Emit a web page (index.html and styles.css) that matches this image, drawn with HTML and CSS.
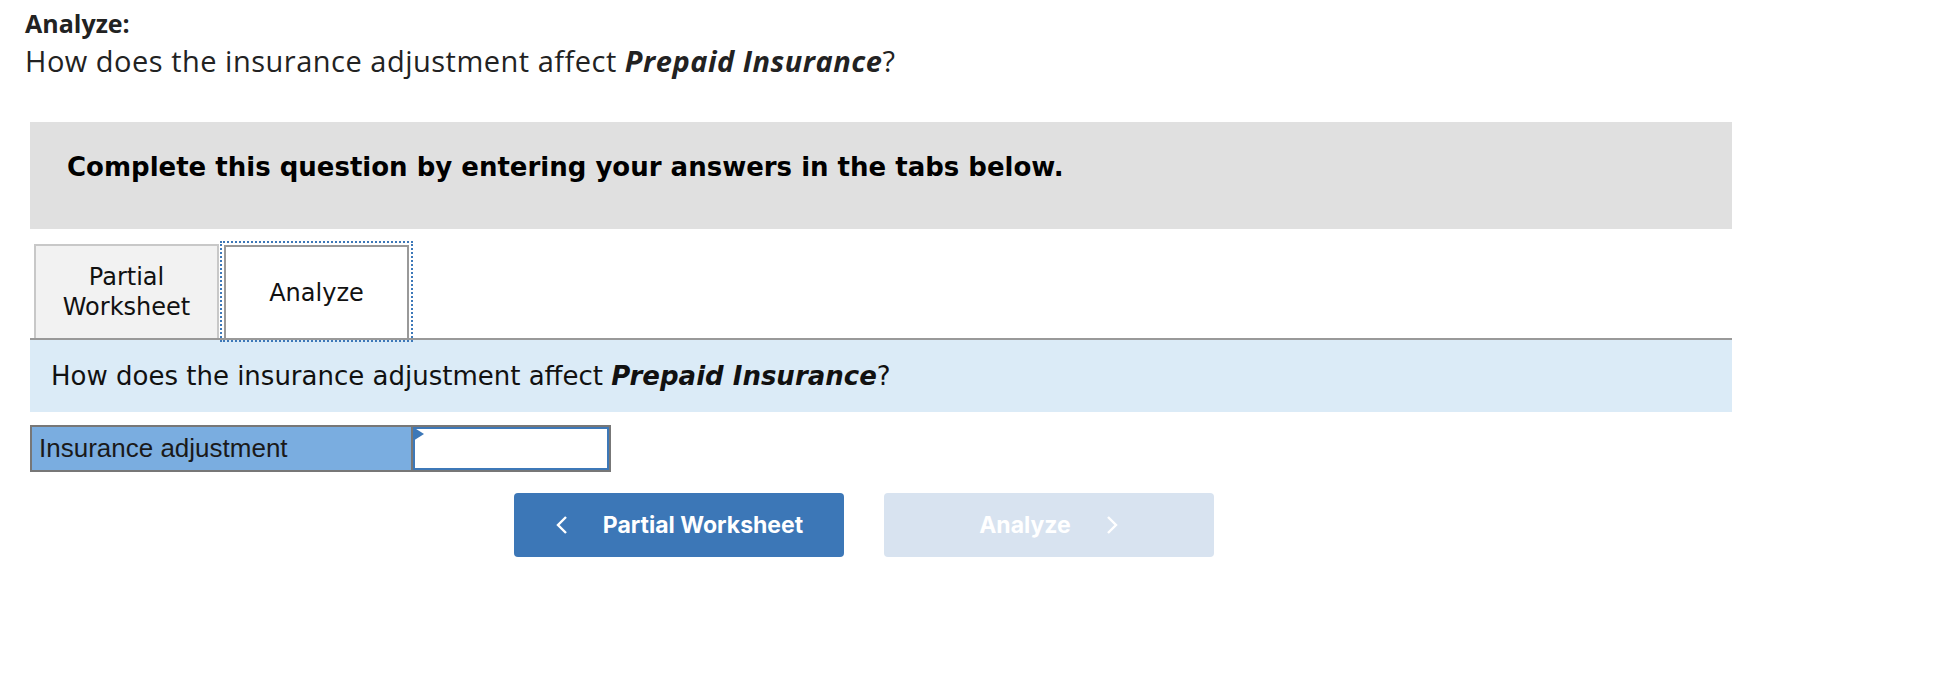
FILE: index.html
```html
<!DOCTYPE html>
<html>
<head>
  <meta charset="UTF-8">
  <title>Analyze</title>
  <link rel="stylesheet" href="styles.css">
</head>
<body>

  <div class="intro">
    <strong>Analyze:</strong><br>
    How does the insurance adjustment affect <b><i>Prepaid Insurance</i></b>?
  </div>

  <div class="panel">
    <div class="instructions">Complete this question by entering your answers in the tabs below.</div>

    <div class="tabs">
      <div class="tab">Partial<br>Worksheet</div>
      <div class="tab active">Analyze</div>
    </div>

    <div class="question">
      <p>How does the insurance adjustment affect <b><i>Prepaid Insurance</i></b>?</p>
    </div>

    <div class="answer-row">
      <div class="answer-label">Insurance adjustment</div>
      <div class="answer-input"><span class="flag"></span></div>
    </div>

    <div class="nav">
      <a class="nav-btn" href="#">
        <svg width="14" height="18" viewBox="0 0 14 18"><polyline points="11,1 3,9 11,17" fill="none" stroke="#fff" stroke-width="2.4"/></svg>
        <span>Partial Worksheet</span>
      </a>
      <a class="nav-btn disabled" href="#">
        <span>Analyze</span>
        <svg width="14" height="18" viewBox="0 0 14 18"><polyline points="3,1 11,9 3,17" fill="none" stroke="#fff" stroke-width="2.4"/></svg>
      </a>
    </div>
  </div>

</body>
</html>
```

FILE: styles.css
```css
body {
  margin: 0;
  background: #fff;
  color: #222;
}
.intro {
  font-family: "Open Sans", Lato, sans-serif;
  font-size: 29px;
  letter-spacing: 0.5px;
  line-height: 38px;
  padding: 3px 0 0 25px;
}
.intro strong {
  font-size: 25px;
  letter-spacing: 0;
  font-weight: 700;
}
.intro b {
  font-weight: 700;
}
.panel {
  margin: 42px 0 0 30px;
  width: 1702px;
}
.instructions {
  box-sizing: border-box;
  height: 107px;
  background: #e0e0e0;
  padding: 31px 37px 0;
  font-family: "DejaVu Sans", Verdana, sans-serif;
  font-weight: bold;
  font-size: 26px;
  line-height: 29px;
  color: #000;
}
.tabs {
  display: flex;
  align-items: flex-end;
  gap: 5px;
  padding-left: 4px;
  margin-top: 15px;
  border-bottom: 2px solid #999;
}
.tab {
  box-sizing: border-box;
  width: 185px;
  height: 94px;
  display: flex;
  align-items: center;
  justify-content: center;
  text-align: center;
  background: #f2f2f2;
  border: 2px solid #c8c8c8;
  border-bottom: none;
  font-family: "DejaVu Sans", Verdana, sans-serif;
  font-size: 24px;
  line-height: 30px;
  color: #111;
}
.tab.active {
  height: 93px;
  background: #fff;
  border-color: #999;
  outline: 2px dotted #3d78b8;
  outline-offset: 2px;
}
.question {
  box-sizing: border-box;
  height: 72px;
  background: #dbebf7;
  padding: 20px 0 0 21px;
  font-family: "DejaVu Sans", Verdana, sans-serif;
  font-size: 26px;
  line-height: 32px;
  color: #111;
}
.question p {
  margin: 0;
}
.answer-row {
  box-sizing: border-box;
  display: flex;
  width: 581px;
  height: 47px;
  margin-top: 13px;
  border: 2px solid #777;
}
.answer-label {
  box-sizing: border-box;
  width: 381px;
  display: flex;
  align-items: center;
  padding-left: 7px;
  background: #7aade0;
  border-right: 2px solid #777;
  font-family: "Liberation Sans", Arial, sans-serif;
  font-size: 26px;
  color: #1a1a1a;
}
.answer-input {
  position: relative;
  flex: 1;
  background: #fff;
  border: 2px solid #3d78b8;
}
.flag {
  position: absolute;
  left: -2px;
  top: -2px;
  width: 0;
  height: 0;
  border-top: 7px solid transparent;
  border-bottom: 7px solid transparent;
  border-left: 11px solid #3d78b8;
}
.nav {
  display: flex;
  gap: 40px;
  margin: 21px 0 0 484px;
}
.nav-btn {
  box-sizing: border-box;
  width: 330px;
  height: 64px;
  display: flex;
  align-items: center;
  justify-content: center;
  gap: 34px;
  background: #3c77b7;
  border-radius: 4px;
  color: #fff;
  text-decoration: none;
  font-family: Inter, Roboto, sans-serif;
  font-weight: bold;
  font-size: 23px;
}
.nav-btn.disabled {
  background: #d8e3f0;
}
```
